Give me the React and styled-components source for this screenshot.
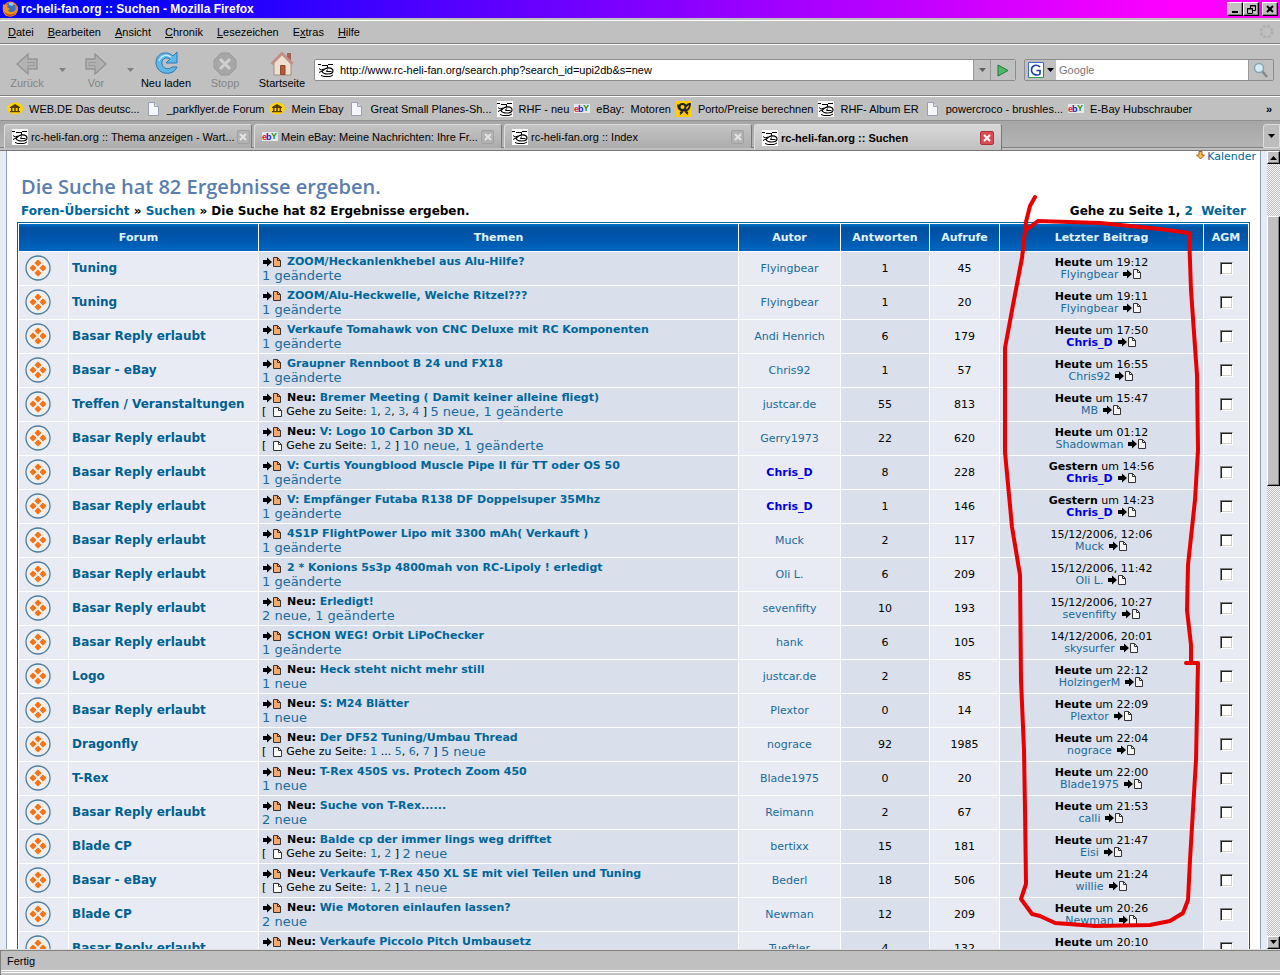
import React from 'react';
import styled, { createGlobalStyle, css } from 'styled-components';

const ui = '"Liberation Sans", Arial, sans-serif';
const web = '"DejaVu Sans", Verdana, sans-serif';

const Global = createGlobalStyle`
  * { box-sizing: border-box; }
  body { margin: 0; background: #c0c0c0; }
  button { font: inherit; color: inherit; padding: 0; border: 0; background: none; }
  a { color: inherit; text-decoration: none; }
`;

const Window = styled.div`
  height: 100vh;
  display: flex;
  flex-direction: column;
  overflow: hidden;
  background: #c0c0c0;
  font: 11px/14px ${ui};
  color: #000;
`;

/* ---------- browser chrome ---------- */
const TitleBar = styled.header`
  height: 18px;
  flex: none;
  display: flex;
  align-items: center;
  gap: 2px;
  padding: 0 2px;
  background: linear-gradient(90deg, #0000ff 0%, #0000ff 8%, #ff00ff 92%, #ff00ff 100%);
  color: #fff;
  font-weight: bold;
  font-size: 12px;
`;
const WindowTitle = styled.span` flex: 1; white-space: nowrap; `;
const raised = css`
  background: #c0c0c0;
  border: 1px solid;
  border-color: #fff #000 #000 #fff;
  box-shadow: inset -1px -1px #808080;
`;
const WindowButton = styled.button`
  ${raised}
  width: 16px;
  height: 14px;
  display: grid;
  place-items: center;
  margin-left: ${p => (p.$apart ? 1 : -2)}px;
`;
const MenuBar = styled.nav`
  flex: none;
  height: 26px;
  display: flex;
  align-items: center;
  gap: 14px;
  padding: 2px 6px 0 8px;
  border-bottom: 1px solid #808080;
  box-shadow: inset 0 2px #c0c0c0, inset 0 3px #fff;
`;
const Spacer = styled.span` flex: 1; `;
const ToolBar = styled.div`
  flex: none;
  height: 52px;
  display: flex;
  align-items: flex-start;
  padding: 6px 6px 0 0;
  border-top: 1px solid #fff;
  border-bottom: 1px solid #808080;
`;
const ToolButton = styled.button`
  width: ${p => p.$w}px;
  flex: none;
  display: flex;
  flex-direction: column;
  align-items: center;
  color: ${p => (p.disabled ? '#858585' : '#000')};
  white-space: nowrap;
  svg { height: 25px; width: 26px; }
`;
const HistoryArrow = styled.button`
  width: 16px;
  height: 38px;
  flex: none;
  display: grid;
  place-items: center;
`;
const Field = styled.div`
  display: flex;
  height: 22px;
  margin-top: 8px;
  border: 1px solid #8c8c8c;
  border-radius: 2px;
  overflow: hidden;
  background: ${p => (p.$white ? '#fff' : '#c0c0c0')};
`;
const AddressField = styled(Field)` flex: 1; margin-left: 6px; align-items: center; `;
const SearchField = styled(Field)` width: 250px; margin-left: 8px; `;
const TextInput = styled.input`
  flex: 1;
  min-width: 0;
  height: 100%;
  border: 0;
  outline: 0;
  padding: 0 3px;
  background: #fff;
  font: 11px ${ui};
  color: #000;
  &::placeholder { color: #777; opacity: 1; }
`;
const FieldButton = styled.button`
  width: ${p => p.$w}px;
  height: 100%;
  flex: none;
  display: flex;
  align-items: center;
  justify-content: center;
  gap: 3px;
  background: #c0c0c0;
  border-left: ${p => (p.$line ? '1px solid #999' : '0')};
`;
const BookmarkBar = styled.nav`
  flex: none;
  height: 25px;
  display: flex;
  align-items: center;
  gap: 5px;
  padding: 0 8px 0 7px;
  border-top: 1px solid #fff;
  border-bottom: 1px solid #909090;
  white-space: nowrap;
`;
const Bookmark = styled.a`
  display: flex;
  align-items: center;
  gap: 6px;
  svg { flex: none; width: 16px; height: 16px; }
`;
const TabBar = styled.div`
  flex: none;
  height: 30px;
  display: flex;
  align-items: flex-start;
  gap: 2px;
  padding: 3px 0 0 4px;
  background: linear-gradient(#a6a6a6, #b4b4b4 26px, #808080 26px, #808080 27px, #c0c0c0 27px);
  border-bottom: 1px solid #777;
`;
const Tab = styled.div`
  width: 248px;
  height: ${p => (p.$active ? 26 : 24)}px;
  display: flex;
  align-items: center;
  gap: 2px;
  padding: 0 3px 0 7px;
  border: 1px solid #ddd;
  border-right-color: #777;
  border-bottom: 0;
  border-radius: 3px 3px 0 0;
  background: ${p => (p.$active ? 'linear-gradient(#d8d8d8, #c0c0c0)' : 'linear-gradient(#c4c4c4, #acacac)')};
  font-weight: ${p => (p.$active ? 'bold' : 'normal')};
  svg { flex: none; }
`;
const TabLabel = styled.button` flex: 1; text-align: left; white-space: nowrap; padding-left: 1px; `;
const CloseButton = styled.button`
  flex: none;
  width: ${p => (p.$hot ? 14 : 13)}px;
  height: 14px;
  margin-right: ${p => (p.$wide ? 4 : 0)}px;
  display: grid;
  place-items: center;
  border: 1px solid ${p => (p.$hot ? '#b03038' : '#a0a0a0')};
  border-radius: 2px;
  background: ${p => (p.$hot ? '#d84c54' : '#b2b2b2')};
`;
const TabList = styled.button`
  width: 17px;
  height: 24px;
  display: grid;
  place-items: center;
  border: 1px solid #ddd;
  border-radius: 3px 0 0 0;
  background: #bcbcbc;
`;
const StatusBar = styled.footer`
  flex: none;
  height: 26px;
  padding: 4px 7px;
  border-top: 1px solid #e0e0e0;
  box-shadow: inset 0 1px #808080, inset 1px 0 #808080, inset 0 -2px #c0c0c0, inset 0 -3px #fff, inset 0 -4px #c0c0c0, inset 0 -5px #fff;
`;

/* ---------- web page ---------- */
const Body = styled.div` flex: 1; min-height: 0; display: flex; `;
const Viewport = styled.main`
  flex: 1;
  min-width: 0;
  position: relative;
  overflow: hidden;
  padding: 0 6px;
  background: #e6ebf6;
  font-family: ${web};
`;
const Page = styled.div`
  min-height: 100%;
  background: #fff;
  border: solid #8ca0b0;
  border-width: 0 1px;
`;
const Content = styled.div` padding: 0 10px; `;
const TopLinks = styled.div`
  height: 20px;
  display: flex;
  justify-content: flex-end;
  align-items: flex-start;
  padding: 0 4px;
  font-size: 11px;
  line-height: 12px;
  color: #006699;
  a { display: flex; gap: 2px; }
`;
const Heading = styled.h1`
  margin: 4px 4px 5px;
  font: 600 20px/24px "Open Sans", "Trebuchet MS", sans-serif;
  color: #5a7eb0;
`;
const Crumbs = styled.div`
  display: flex;
  justify-content: space-between;
  padding: 0 4px;
  margin-bottom: 3px;
  font-weight: bold;
  font-size: 12px;
  line-height: 15px;
  white-space: pre;
  a { color: #006699; }
`;
const Results = styled.table`
  width: 100%;
  table-layout: fixed;
  border: 1px solid #006699;
  border-spacing: 1px;
  background: #fff;
  font-size: 11px;
`;
const Col = styled.col` width: ${p => (p.$w ? p.$w + 'px' : 'auto')}; `;
const Head = styled.th`
  height: 27px;
  padding: 0;
  background: linear-gradient(#0070c8, #0050a0 4px, #0054a8 12px, #0066c0);
  color: #e0f4ff;
  font-size: 11px;
`;
const Cell = styled.td`
  height: 33px;
  padding: ${p => (p.$left ? '0 3px' : '0')};
  text-align: ${p => (p.$left ? 'left' : 'center')};
  vertical-align: middle;
  white-space: nowrap;
  overflow: hidden;
  background: ${p => (p.$dark ? '#d9e0eb' : '#e8ebf3')};
  line-height: 14px;
`;
const ForumLink = styled.a` color: #006090; font-weight: bold; font-size: 12px; `;
const Line = styled.div`
  display: flex;
  align-items: center;
  height: 14px;
  white-space: pre;
  svg { flex: none; }
`;
const TopicTitle = styled.strong`
  margin-left: 5px;
  font-size: 11px;
  a { color: #006699; }
`;
const Changes = styled.a` font-size: 13px; color: #1a6a9c; `;
const Pages = styled.span`
  display: flex;
  align-items: center;
  font-size: 11px;
  a { color: #1a6a9c; }
  svg { margin-right: 4px; }
`;
const User = styled.a`
  color: ${p => (p.$admin ? '#0000dd' : '#1a6a9c')};
  font-weight: ${p => (p.$admin ? 'bold' : 'normal')};
`;
const LastPost = styled.div`
  font-size: 11px;
  line-height: 12px;
  svg { vertical-align: -1px; margin-left: 4px; }
`;
const StatusIcon = styled.svg` display: block; margin: 0 0 1px 6px; `;
const Check = styled.input`
  appearance: none;
  display: block;
  width: 13px;
  height: 13px;
  margin: 0 auto;
  background: #fff;
  border: 1px solid;
  border-color: #808080 #fff #fff #808080;
  box-shadow: inset 1px 1px #202020, inset -1px -1px #d4d0c8;
`;
const Markup = styled.svg`
  position: absolute;
  top: 0;
  right: 0;
  pointer-events: none;
`;
const ScrollBar = styled.div`
  width: 13px;
  flex: none;
  display: flex;
  flex-direction: column;
  background: repeating-conic-gradient(#c0c0c0 0 25%, #f4f4f4 0 50%) 0 0 / 2px 2px;
`;
const ScrollButton = styled.button`
  ${raised}
  height: 13px;
  display: grid;
  place-items: center;
`;
const Before = styled.div` flex: 52; `;
const Thumb = styled.div` ${raised} flex: 269; `;
const After = styled.div` flex: 451; `;

/* ---------- icons ---------- */
const Down = ({ c = '#000', up }) => (
  <svg width="7" height="4" viewBox="0 0 7 4"><path d={up ? 'M0 4h7L3.5 0z' : 'M0 0h7L3.5 4z'} fill={c} /></svg>
);
const Firefox = () => (
  <svg width="17" height="16" viewBox="0 0 17 16">
    <circle cx="8.5" cy="8" r="7.5" fill="#e87818" />
    <circle cx="8.5" cy="7" r="5" fill="#3870c0" />
    <path d="M7 2c3-1 5 0 5 1l-2 2-3-1z" fill="#90c8f0" />
    <path d="M1 3l2 1 3 0-1 2 3 2-2 1c1 3 5 3 8 0l1-5c2 4 0 11-6.500 11.500S0 11 1 3z" fill="#f09020" />
    <path d="M2 10c2 4 8 5 12 1-2 5-10 6-12-1z" fill="#c04010" />
  </svg>
);
const Heli = () => (
  <svg width="16" height="16" viewBox="0 0 16 16">
    <path d="M0 0h16v16H0z" fill="#fff" />
    <path d="M0 2.500h3M4 3.500h5M10 2.500h5M9.500 3v3" stroke="#000" fill="none" />
    <path d="M1 6.500l2 1.500 3-1M1 10.500l4-2M3 13.500l3 1h6l3-1.500" stroke="#000" fill="none" />
    <path d="M4 9.500C6 7 8 5.800 10.500 5.800S15 7 15 9s-2.500 3-5.500 3S5 11.500 4 9.500z" fill="#fff" stroke="#000" strokeWidth="1.200" />
    <path d="M9.500 7.500l-1 2h5" stroke="#000" fill="none" />
  </svg>
);
const Ebay = () => (
  <svg width="16" height="16" viewBox="0 0 16 16" fontFamily="Liberation Sans" fontWeight="bold" fontSize="9">
    <path d="M0 3h16v9H0z" fill="#e8e8e8" />
    <text x="0" y="11" fill="#e02020">e</text><text x="4" y="11" fill="#2020c0">b</text><text x="9" y="10" fill="#209020">Y</text>
  </svg>
);
const WebDe = () => (
  <svg viewBox="0 0 16 16"><ellipse cx="8" cy="7.5" rx="8" ry="6" fill="#ffd400" /><path d="M3 6l5-3 5 3v1H3zM4 7h1.500v3H4zM7.200 7h1.600v3H7.200zM10.500 7H12v3h-1.500zM3 10h10v1.200H3z" fill="#5a3c00" /></svg>
);
const Sheet = () => (
  <svg viewBox="0 0 16 16"><path d="M3.500 1.500h6l4 4v9h-10z" fill="#f4f6fa" stroke="#98a0b0" /><path d="M9.500 1.500v4h4" fill="#d8dce8" stroke="#98a0b0" /></svg>
);
const Post = () => (
  <svg viewBox="0 0 16 16"><path d="M0 0h16v16H0z" fill="#ffcc00" /><circle cx="6.500" cy="6" r="3" fill="none" stroke="#222" strokeWidth="2" /><path d="M2 3.500c0 4 2 6 6 6s6-2 6-6.500c-2 0-3 .5-4 2.500" fill="none" stroke="#222" strokeWidth="1.800" /><path d="M7 10l-3 1.500h2L4 13.500M9 10l3 1.500h-2l2 2" stroke="#222" fill="none" strokeWidth="1.200" /></svg>
);
const Arrow = ({ flip }) => (
  <svg viewBox="0 0 26 25"><g transform={flip ? 'translate(26 0) scale(-1 1)' : undefined}><path d="M3 13L14 3v5h9v10h-9v5z" fill="#b2b2b2" stroke="#949494" strokeWidth="1.400" /><path d="M13 11.500h7v3h-6v3" stroke="#989898" fill="none" /></g></svg>
);
const Reload = () => (
  <svg viewBox="0 0 26 25"><path d="M20 5l4-4v11H13l4-4c-5-3-9 1-8 5 1 5 7 6 10 3h5c-3 9-20 9-21-4C3 2 13-1 20 5z" fill="#62b6e6" stroke="#2b78b4" /><path d="M6 10C8 4 14 3 18 6" stroke="#c4e8fa" fill="none" strokeWidth="1.500" /></svg>
);
const Stop = () => (
  <svg viewBox="0 0 26 25"><path d="M9 2h8l7 7v8l-7 7H9l-7-7V9z" fill="#a6a6a6" stroke="#9a9a9a" /><path d="M8 8l10 10M18 8L8 18" stroke="#d0d0d0" strokeWidth="3" /></svg>
);
const Home = () => (
  <svg viewBox="0 0 26 25"><path d="M18 2h4v8l-4-3z" fill="#a86058" /><path d="M5 12v12h17V12l-9-9z" fill="#eee0d0" stroke="#a09080" /><path d="M2.500 13L13 2.500 23.500 13" fill="none" stroke="#c09088" strokeWidth="3" /><path d="M11.500 14.500h4.500v9h-4.500z" fill="#b45a34" stroke="#8c4830" /></svg>
);
const Cross = ({ c = '#e4e4e4' }) => (
  <svg width="8" height="8" viewBox="0 0 8 8"><path d="M1 1l6 6M7 1L1 7" stroke={c} strokeWidth="2" /></svg>
);
const Doc = ({ fill = '#fff' }) => (
  <svg width="9" height="10" viewBox="0 0 9 10"><path d="M.5.5h5l3 3v6h-8z" fill={fill} stroke="#333" /><path d="M5.500.5v3h3" fill="none" stroke="#333" /></svg>
);
const GoDoc = ({ fill = '#f6f6f6' }) => (
  <svg width="20" height="10" viewBox="0 0 20 10"><path d="M1 3h4V.5L10 5 5 9.500V7H1z" fill="#000" /><path d="M11.500.5h4l3 3v6h-7z" fill={fill} stroke="#333" /><path d="M15.500.5v3h3" fill="none" stroke="#333" /></svg>
);
const Status = () => (
  <StatusIcon width="26" height="26" viewBox="0 0 26 26">
    <circle cx="13" cy="13" r="12" fill="#f1f0ee" stroke="#4b7fa3" strokeWidth="1.300" />
    <g fill="#f47418" stroke="#f47418" strokeWidth="1.600" strokeLinejoin="round">
      <path d="M13 5.500l2.500 2.500-2.500 2.500L10.500 8zM8 10.500l2.500 2.500L8 15.500 5.500 13zM18 10.500l2.500 2.500-2.500 2.500-2.500-2.500zM13 15.500l2.500 2.500-2.500 2.500-2.500-2.500z" />
    </g>
  </StatusIcon>
);

/* ---------- data ---------- */
const menus = ['Datei', 'Bearbeiten', 'Ansicht', 'Chronik', 'Lesezeichen', 'Extras', 'Hilfe'];
const bookmarks = [
  [WebDe, 'WEB.DE Das deutsc...'], [Sheet, '_parkflyer.de Forum'], [WebDe, 'Mein Ebay'], [Sheet, 'Great Small Planes-Sh...'],
  [Heli, 'RHF - neu'], [Ebay, 'eBay:  Motoren'], [Post, 'Porto/Preise berechnen'], [Heli, 'RHF- Album ER'],
  [Sheet, 'powercroco - brushles...'], [Ebay, 'E-Bay Hubschrauber'],
];
const tabs = [
  [Heli, 'rc-heli-fan.org :: Thema anzeigen - Wart...'], [Ebay, 'Mein eBay: Meine Nachrichten: Ihre Fr...'],
  [Heli, 'rc-heli-fan.org :: Index'], [Heli, 'rc-heli-fan.org :: Suchen'],
];
const B = 'Basar Reply erlaubt';
/* forum, is new, title, pages, changes, author, replies, views, day, time, last author */
const rows = [
  ['Tuning', 0, 'ZOOM/Heckanlenkhebel aus Alu-Hilfe?', '', '1 geänderte', 'Flyingbear', 1, 45, 'Heute', '19:12', 'Flyingbear'],
  ['Tuning', 0, 'ZOOM/Alu-Heckwelle, Welche Ritzel???', '', '1 geänderte', 'Flyingbear', 1, 20, 'Heute', '19:11', 'Flyingbear'],
  [B, 0, 'Verkaufe Tomahawk von CNC Deluxe mit RC Komponenten', '', '1 geänderte', 'Andi Henrich', 6, 179, 'Heute', '17:50', 'Chris_D'],
  ['Basar - eBay', 0, 'Graupner Rennboot B 24 und FX18', '', '1 geänderte', 'Chris92', 1, 57, 'Heute', '16:55', 'Chris92'],
  ['Treffen / Veranstaltungen', 1, 'Bremer Meeting ( Damit keiner alleine fliegt)', '1, 2, 3, 4', '5 neue, 1 geänderte', 'justcar.de', 55, 813, 'Heute', '15:47', 'MB'],
  [B, 1, 'V: Logo 10 Carbon 3D XL', '1, 2', '10 neue, 1 geänderte', 'Gerry1973', 22, 620, 'Heute', '01:12', 'Shadowman'],
  [B, 0, 'V: Curtis Youngblood Muscle Pipe II für TT oder OS 50', '', '1 geänderte', 'Chris_D', 8, 228, 'Gestern', '14:56', 'Chris_D'],
  [B, 0, 'V: Empfänger Futaba R138 DF Doppelsuper 35Mhz', '', '1 geänderte', 'Chris_D', 1, 146, 'Gestern', '14:23', 'Chris_D'],
  [B, 0, '4S1P FlightPower Lipo mit 3300 mAh( Verkauft )', '', '1 geänderte', 'Muck', 2, 117, '', '15/12/2006, 12:06', 'Muck'],
  [B, 0, '2 * Konions 5s3p 4800mah von RC-Lipoly ! erledigt', '', '1 geänderte', 'Oli L.', 6, 209, '', '15/12/2006, 11:42', 'Oli L.'],
  [B, 1, 'Erledigt!', '', '2 neue, 1 geänderte', 'sevenfifty', 10, 193, '', '15/12/2006, 10:27', 'sevenfifty'],
  [B, 0, 'SCHON WEG! Orbit LiPoChecker', '', '1 geänderte', 'hank', 6, 105, '', '14/12/2006, 20:01', 'skysurfer'],
  ['Logo', 1, 'Heck steht nicht mehr still', '', '1 neue', 'justcar.de', 2, 85, 'Heute', '22:12', 'HolzingerM'],
  [B, 1, 'S: M24 Blätter', '', '1 neue', 'Plextor', 0, 14, 'Heute', '22:09', 'Plextor'],
  ['Dragonfly', 1, 'Der DF52 Tuning/Umbau Thread', '1 ... 5, 6, 7', '5 neue', 'nograce', 92, 1985, 'Heute', '22:04', 'nograce'],
  ['T-Rex', 1, 'T-Rex 450S vs. Protech Zoom 450', '', '1 neue', 'Blade1975', 0, 20, 'Heute', '22:00', 'Blade1975'],
  [B, 1, 'Suche von T-Rex......', '', '2 neue', 'Reimann', 2, 67, 'Heute', '21:53', 'calli'],
  ['Blade CP', 1, 'Balde cp der immer lings weg drifftet', '1, 2', '2 neue', 'bertixx', 15, 181, 'Heute', '21:47', 'Eisi'],
  ['Basar - eBay', 1, 'Verkaufe T-Rex 450 XL SE mit viel Teilen und Tuning', '1, 2', '1 neue', 'Bederl', 18, 506, 'Heute', '21:24', 'willie'],
  ['Blade CP', 1, 'Wie Motoren einlaufen lassen?', '', '2 neue', 'Newman', 12, 209, 'Heute', '20:26', 'Newman'],
  [B, 1, 'Verkaufe Piccolo Pitch Umbausetz', '', '1 neue', 'Tueftler', 4, 132, 'Heute', '20:10', 'Tueftler'],
];

const PageLinks = ({ pages }) => pages.split(/([0-9]+)/).map((s, i) => (i % 2 ? <a key={i} href="#page">{s}</a> : s));

const UserLink = ({ name }) => <User href="#user" $admin={name === 'Chris_D'}>{name}</User>;

function Row({ row }) {
  const [forum, isNew, title, pages, changes, author, replies, views, day, time, last] = row;
  return (
    <tr>
      <Cell><Status /></Cell>
      <Cell $left><ForumLink href="#forum">{forum}</ForumLink></Cell>
      <Cell $left $dark>
        <Line><GoDoc fill="#f8a868" /><TopicTitle>{isNew ? 'Neu: ' : ''}<a href="#topic">{title}</a></TopicTitle></Line>
        <Line>
          {pages && <Pages>{'[  '}<Doc />{'Gehe zu Seite: '}<PageLinks pages={pages} />{' ] '}</Pages>}
          <Changes href="#changes">{changes}</Changes>
        </Line>
      </Cell>
      <Cell><UserLink name={author} /></Cell>
      <Cell $dark>{replies}</Cell>
      <Cell>{views}</Cell>
      <Cell $dark>
        <LastPost>
          <div>{day && <><b>{day}</b> um </>}{time}</div>
          <div><UserLink name={last} /><GoDoc /></div>
        </LastPost>
      </Cell>
      <Cell><Check type="checkbox" aria-label={title} /></Cell>
    </tr>
  );
}

export default function App() {
  return (
    <Window>
      <Global />
      <TitleBar>
        <Firefox />
        <WindowTitle>rc-heli-fan.org :: Suchen - Mozilla Firefox</WindowTitle>
        <WindowButton aria-label="Minimieren"><svg width="8" height="8"><path d="M1 6h6v2H1z" /></svg></WindowButton>
        <WindowButton aria-label="Wiederherstellen"><svg width="9" height="9" fill="none" stroke="#000"><path d="M3.500 3V.5h5v5H6M3 1h6M.5 3.500h5v5h-5zM0 4h6" /></svg></WindowButton>
        <WindowButton $apart aria-label="Schließen"><Cross c="#000" /></WindowButton>
      </TitleBar>
      <MenuBar>
        {menus.map(m => {
          const k = m === 'Extras' ? 1 : 0;
          return <button key={m}>{m.slice(0, k)}<u>{m[k]}</u>{m.slice(k + 1)}</button>;
        })}
        <Spacer />
        <svg width="15" height="15"><circle cx="7.5" cy="7.5" r="5.5" fill="none" stroke="#b0b0b0" strokeWidth="3" strokeDasharray="3 1.300" /></svg>
      </MenuBar>
      <ToolBar>
        <ToolButton $w={54} disabled><Arrow />Zurück</ToolButton>
        <HistoryArrow aria-label="Verlauf zurück"><Down c="#808080" /></HistoryArrow>
        <ToolButton $w={52} disabled><Arrow flip />Vor</ToolButton>
        <HistoryArrow aria-label="Verlauf vor"><Down c="#808080" /></HistoryArrow>
        <ToolButton $w={56}><Reload />Neu laden</ToolButton>
        <ToolButton $w={62} disabled><Stop />Stopp</ToolButton>
        <ToolButton $w={52}><Home />Startseite</ToolButton>
        <AddressField $white>
          <svg width="22" height="16" viewBox="-3 0 22 16"><Heli /></svg>
          <TextInput aria-label="Adresse" defaultValue="http://www.rc-heli-fan.org/search.php?search_id=upi2db&s=new" />
          <FieldButton $w={17} $line aria-label="Adressliste"><Down c="#606060" /></FieldButton>
          <FieldButton $w={25} $line aria-label="Los"><svg width="12" height="13"><path d="M1 1l10 5.500L1 12z" fill="#4cb868" stroke="#1e7a3c" /></svg></FieldButton>
        </AddressField>
        <SearchField>
          <FieldButton $w={31} aria-label="Suchmaschine">
            <svg width="16" height="16"><path d="M.5.5h15v15H.5z" fill="#fff" stroke="#3a6ad0" /><path d="M15.500 1v14" stroke="#d03030" /><path d="M1 15.500h14" stroke="#30a040" /><path d="M12 5C9 2 3.500 3 3.500 8s6 6 8.500 4V8.500H8.500" fill="none" stroke="#1a3ca0" strokeWidth="1.600" /></svg>
            <Down />
          </FieldButton>
          <TextInput aria-label="Suche" placeholder="Google" />
          <FieldButton $w={25} $line aria-label="Suchen"><svg width="16" height="16"><path d="M9 9l5 6" stroke="#888" strokeWidth="2.500" /><circle cx="6" cy="6" r="4.5" fill="#d4ecf8" stroke="#8aa4b4" strokeWidth="1.500" /></svg></FieldButton>
        </SearchField>
      </ToolBar>
      <BookmarkBar>
        {bookmarks.map(([Icon, label]) => <Bookmark key={label} href="#bookmark"><Icon />{label.replace('  ', ' \u00a0')}</Bookmark>)}
        <Spacer />
        <button><b>»</b></button>
      </BookmarkBar>
      <TabBar>
        {tabs.map(([Icon, label], i) => (
          <Tab key={label} $active={i === 3}>
            <Icon /><TabLabel>{label}</TabLabel>
            <CloseButton $hot={i === 3} $wide={i > 0} aria-label="Tab schließen"><Cross c={i === 3 ? '#fff' : undefined} /></CloseButton>
          </Tab>
        ))}
        <Spacer />
        <TabList aria-label="Alle Tabs"><Down /></TabList>
      </TabBar>
      <Body>
        <Viewport>
          <Page>
            <TopLinks><a href="#kalender"><svg width="9" height="9"><path d="M3 .5h3V4h2.500l-4 4-4-4H3z" fill="#ffc040" stroke="#a06020" /></svg>Kalender</a></TopLinks>
            <Content>
              <Heading>Die Suche hat 82 Ergebnisse ergeben.</Heading>
              <Crumbs>
                <span><a href="#index">Foren-Übersicht</a> » <a href="#suchen">Suchen</a> » Die Suche hat 82 Ergebnisse ergeben.</span>
                <span>Gehe zu Seite 1, <a href="#2">2</a>{'  '}<a href="#weiter">Weiter</a></span>
              </Crumbs>
              <Results>
                <colgroup>{[49, 189, 0, 101, 88, 69, 203, 44].map((w, i) => <Col key={i} $w={w} />)}</colgroup>
                <thead>
                  <tr>
                    <Head colSpan={2}>Forum</Head><Head>Themen</Head><Head>Autor</Head><Head>Antworten</Head>
                    <Head>Aufrufe</Head><Head>Letzter Beitrag</Head><Head>AGM</Head>
                  </tr>
                </thead>
                <tbody>{rows.map((r, i) => <Row key={i} row={r} />)}</tbody>
              </Results>
            </Content>
          </Page>
          <Markup width="267" height="798" viewBox="1000 151 267 798" fill="none" stroke="#e80000" strokeWidth="4" strokeLinecap="round" strokeLinejoin="round">
            <path d="M1035 197L1030 206 1026 222 1022 258 1013 305 1005 348V452L1012 527 1020 575 1021 680 1024 750 1025 810 1026 884 1021 899 1032 914 1040 916 1055 923 1095 926 1150 925 1170 921 1183 913 1188 900 1190 860 1196 760 1198 663H1186" />
            <path d="M1191 662V645L1187 610 1188 565 1195 500 1198 450 1197 375 1191 290 1189 233 1160 229 1100 223 1038 221 1026 230" />
          </Markup>
        </Viewport>
        <ScrollBar>
          <ScrollButton aria-label="Nach oben"><Down up /></ScrollButton>
          <Before /><Thumb /><After />
          <ScrollButton aria-label="Nach unten"><Down /></ScrollButton>
        </ScrollBar>
      </Body>
      <StatusBar>Fertig</StatusBar>
    </Window>
  );
}
